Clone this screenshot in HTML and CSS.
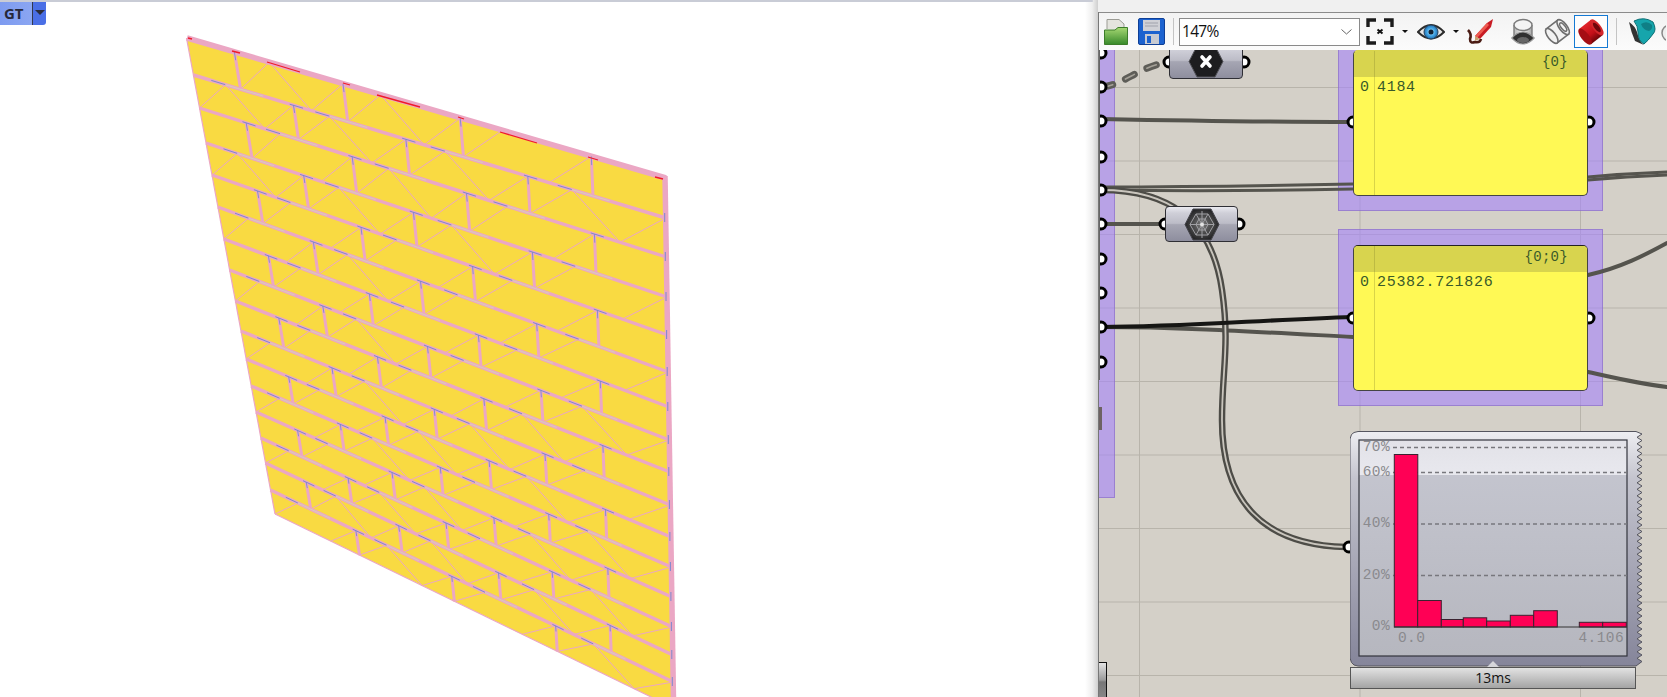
FILE: index.html
```html
<!DOCTYPE html>
<html lang="en">
<head>
<meta charset="utf-8">
<title>Grasshopper and Rhino viewport</title>
<link rel="stylesheet" href="styles.css">
</head>
<body>
<main class="app">
  <section class="viewport">
    <svg id="wall" class="wall" width="1085" height="697" viewBox="0 0 1085 697"></svg>
    <div class="gt-button">
      <span class="gt-label">GT</span>
      <span class="gt-drop"><span class="gt-caret"></span></span>
    </div>
  </section>
  <div class="edge"></div>
  <section class="editor">
    <div class="titlebar"></div>
    <div class="toolbar">
      <svg class="tool t-folder" width="24" height="27" viewBox="0 0 24 27">
        <defs><linearGradient id="gf" x1="0" y1="0" x2="0" y2="1"><stop offset="0" stop-color="#a6d873"/><stop offset="1" stop-color="#37892a"/></linearGradient></defs>
        <path d="M3 11V1.500H15L20 6V12" fill="#e4e4de" stroke="#9b9b94"/>
        <path d="M.5 26.500V12H11L14 9.500H23.500V26.500Z" fill="url(#gf)" stroke="#3c7d2a"/>
      </svg>
      <svg class="tool t-floppy" width="27" height="27" viewBox="0 0 27 27">
        <path d="M2 .5H25Q26.500 .5 26.500 2V25Q26.500 26.500 25 26.500H2Q.5 26.500 .5 25V2Q.5 .5 2 .5Z" fill="#1c62cf" stroke="#0f3f96"/>
        <rect x="5" y="2" width="17" height="11" fill="#cfd0d6"/>
        <path d="M7 5H20M7 8H20" stroke="#a0a2ac"/>
        <rect x="7" y="16" width="14" height="10" fill="#c7cad2"/>
        <rect x="9" y="18" width="4" height="7" fill="#1c62cf"/>
      </svg>
      <span class="tool tool-sep t-sep1"></span>
      <div class="tool combo">
        <span class="combo-value">147%</span>
        <svg class="combo-chevron" width="11" height="6" viewBox="0 0 11 6"><path d="M.5 .5L5.500 5L10.500 .5" fill="none" stroke="#666"/></svg>
      </div>
      <svg class="tool t-extents" width="28" height="27" viewBox="0 0 28 27">
        <path d="M2 9V2H10M18 2H26V9M26 18V25H18M10 25H2V18" fill="none" stroke="#1b1b1b" stroke-width="3.400"/>
        <path d="M11.500 11.500L16.500 15.500M16.500 11.500L11.500 15.500" stroke="#111" stroke-width="2"/>
      </svg>
      <span class="tool tool-caret t-caret1"></span>
      <svg class="tool t-eye" width="28" height="20" viewBox="0 0 28 20">
        <defs><radialGradient id="gi"><stop offset="0" stop-color="#d8f2ff"/><stop offset=".55" stop-color="#45a8e6"/><stop offset="1" stop-color="#1f6db0"/></radialGradient></defs>
        <path d="M1 10Q14 -4 27 10Q14 23 1 10Z" fill="#e8e8e8" stroke="#2c2c2c" stroke-width="2"/>
        <circle cx="14" cy="10" r="7" fill="url(#gi)" stroke="#24425e"/>
        <circle cx="14" cy="10" r="2.500" fill="#123"/>
      </svg>
      <span class="tool tool-caret t-caret2"></span>
      <svg class="tool t-pen" width="27" height="27" viewBox="0 0 27 27">
        <path d="M1 12Q5 16 3 21Q3 26 8 24Q13 25 14 21" fill="none" stroke="#4a1c14" stroke-width="2.600"/>
        <path d="M8 18L20 5L26 1L24 9L13 21Z" fill="#c81c24"/>
        <path d="M8 18L20 5L22 7L10 20Z" fill="#ee5a50"/>
        <path d="M8 18L13 21L8 23Z" fill="#c9a070"/>
      </svg>
      <svg class="tool t-off" width="24" height="28" viewBox="0 0 24 28">
        <defs><linearGradient id="go" x1="0" y1="0" x2="1" y2="0"><stop offset="0" stop-color="#b8b8b8"/><stop offset=".5" stop-color="#f0f0f0"/><stop offset="1" stop-color="#a8a8a8"/></linearGradient></defs>
        <path d="M3 7V19H21V7" fill="url(#go)" stroke="#7c7c7c" stroke-width="1.400"/>
        <ellipse cx="12" cy="7" rx="9" ry="5.500" fill="#f4f4f4" stroke="#7c7c7c" stroke-width="1.400"/>
        <path d="M.8 20Q12 8 23.200 20Q12 32 .8 20Z" fill="#303030" stroke="#9a9a9a" stroke-width="1.200"/>
        <ellipse cx="12" cy="22" rx="6" ry="3" fill="#666"/>
      </svg>
      <svg class="tool t-wire" width="27" height="27" viewBox="0 0 27 27">
        <g transform="rotate(-38 13.500 13.500) translate(2 2) scale(.85)" fill="#f2f2f2" stroke="#6e6e6e" stroke-width="1.900">
          <path d="M5 3H22V24H5Z"/>
          <ellipse cx="5" cy="13.500" rx="4.500" ry="10.500"/>
          <ellipse cx="22" cy="13.500" rx="4.500" ry="10.500"/>
          <ellipse cx="22" cy="13.500" rx="2.400" ry="6"/>
        </g>
      </svg>
      <div class="tool shade-box">
        <svg width="28" height="28" viewBox="0 0 27 27">
          <defs><linearGradient id="gr" x1="0" y1="0" x2="0" y2="1"><stop offset="0" stop-color="#e0242a"/><stop offset=".6" stop-color="#c20f18"/><stop offset="1" stop-color="#6d0509"/></linearGradient></defs>
          <g transform="rotate(-38 13.500 13.500) translate(2 2) scale(.85)">
            <rect x="5" y="2.500" width="17" height="22" fill="url(#gr)"/>
            <ellipse cx="5" cy="13.500" rx="4.500" ry="11" fill="#a50d14"/>
            <ellipse cx="22" cy="13.500" rx="4.500" ry="11" fill="#d3262b"/>
            <ellipse cx="22" cy="13.500" rx="2.600" ry="6.500" fill="#6e060b"/>
          </g>
        </svg>
      </div>
      <span class="tool tool-sep t-sep2"></span>
      <svg class="tool t-teal" width="29" height="28" viewBox="0 0 29 28">
        <path d="M1 4Q7 8 9 14Q11 23 16 27L7 23Q3 14 1 4Z" fill="#333"/>
        <path d="M6 3Q16 -2 25 4Q29 12 25 16Q20 23 16 26Q10 23 10 14Q10 8 6 3Z" fill="#16a5ac" stroke="#0e6f75"/>
        <path d="M13 6Q19 2 24 7Q25 11 21 13Q15 12 13 6Z" fill="#0f7f86"/>
      </svg>
      <svg class="tool t-partial" width="6" height="27" viewBox="0 0 6 27">
        <ellipse cx="10" cy="15" rx="8" ry="8" fill="#eee" stroke="#888" stroke-width="1.500"/>
      </svg>
    </div>
    <div class="canvas">
      <div class="group group-left"></div>
      <div class="group group-a"></div>
      <div class="group group-b"></div>

      <svg class="wires" width="568" height="647" viewBox="1099 50 568 647">
        <g fill="none" stroke-linecap="round">
          <path class="dash-outer" d="M1103 87C1125 84 1140 66 1169 62"/>
          <path class="dash-inner" d="M1103 87C1125 84 1140 66 1169 62"/>
          <path class="wire" d="M1101 119C1200 121 1250 122 1353 122"/>
          <path class="wire-thin" d="M1101 187C1180 187 1260 186 1353 184"/>
          <path class="wire-thin" d="M1101 190C1180 191 1260 191 1353 189"/>
          <path class="wire-thin" d="M1588 177C1610 175 1640 173 1667 172"/>
          <path class="wire-thin" d="M1588 180C1610 178 1640 176 1667 175"/>
          <path class="wire" d="M1101 224H1165"/>
          <path class="wire" d="M1101 327C1180 327 1260 332 1353 337"/>
          <path class="long-outer" d="M1101 190C1170 190 1212 220 1222 290C1230 345 1222 370 1222 420C1222 500 1262 545 1346 547"/>
          <path class="long-inner" d="M1101 190C1170 190 1212 220 1222 290C1230 345 1222 370 1222 420C1222 500 1262 545 1346 547"/>
          <path class="wire-black" d="M1101 327C1180 327 1260 320 1353 317"/>
          <path class="wire" d="M1588 275C1620 268 1645 255 1667 243"/>
          <path class="wire" d="M1588 372C1615 378 1640 384 1667 387"/>
        </g>
        <g class="ports">
          <circle cx="1101" cy="53" r="5"/><circle cx="1101" cy="87" r="5"/><circle cx="1101" cy="121" r="5"/>
          <circle cx="1101" cy="157" r="5"/><circle cx="1101" cy="190" r="5"/><circle cx="1101" cy="224" r="5"/>
          <circle cx="1101" cy="259" r="5"/><circle cx="1101" cy="293" r="5"/><circle cx="1101" cy="327" r="5"/>
          <circle cx="1101" cy="362" r="5"/>
          <circle cx="1169" cy="62" r="5"/><circle cx="1244" cy="62" r="5"/>
          <circle cx="1165" cy="224" r="5"/><circle cx="1239" cy="224" r="5"/>
          <circle cx="1353" cy="122" r="5"/><circle cx="1589" cy="122" r="5"/>
          <circle cx="1353" cy="318" r="5"/><circle cx="1589" cy="318" r="5"/>
          <circle cx="1349" cy="547" r="5"/>
        </g>
      </svg>

      <span class="left-rail"></span>
      <span class="left-stub"></span>
      <span class="left-thumb"></span>

      <div class="node node-x">
        <svg width="36" height="33" viewBox="0 0 36 33">
          <path d="M9 1H27L35 16.500L27 32H9L1 16.500Z" fill="#1d1d1f" stroke="#55555b"/>
          <path d="M14 12L22 21M22 12L14 21" stroke="#fff" stroke-width="3.600" stroke-linecap="round"/>
        </svg>
      </div>
      <div class="node node-web">
        <svg width="36" height="33" viewBox="0 0 36 33">
          <defs><radialGradient id="gw"><stop offset="0" stop-color="#777"/><stop offset="1" stop-color="#262628"/></radialGradient></defs>
          <path d="M9 1H27L35 16.500L27 32H9L1 16.500Z" fill="url(#gw)" stroke="#45454b"/>
          <g fill="none" stroke="#a0a0a4" stroke-width="1">
            <path d="M12 6H24L30 16.500L24 27H12L6 16.500Z"/>
            <path d="M15 11H21L24 16.500L21 22H15L12 16.500Z"/>
            <path d="M12 6L24 27M24 6L12 27M6 16.500H30M18 3V30"/>
          </g>
          <circle cx="18" cy="16.500" r="2" fill="#e4e4e4"/>
        </svg>
      </div>

      <article class="panel panel-a">
        <header class="panel-head">{0}</header>
        <div class="panel-row"><span class="panel-index">0</span><span class="panel-value">4184</span></div>
      </article>
      <article class="panel panel-b">
        <header class="panel-head">{0;0}</header>
        <div class="panel-row"><span class="panel-index">0</span><span class="panel-value">25382.721826</span></div>
      </article>

      <figure class="hist">
        <svg class="hist-chart" width="293" height="236" viewBox="1350 431 293 236">
          <defs>
            <linearGradient id="gb" x1="0" y1="0" x2="0" y2="1"><stop offset="0" stop-color="#eeeef2"/><stop offset=".2" stop-color="#c4c4ce"/><stop offset="1" stop-color="#85859a"/></linearGradient>
            <linearGradient id="gt" x1="0" y1="0" x2="0" y2="1"><stop offset="0" stop-color="#e2e2e8"/><stop offset="1" stop-color="#e8e8ee"/></linearGradient>
            <linearGradient id="gl" x1="0" y1="0" x2="0" y2="1"><stop offset="0" stop-color="#c6c7d1"/><stop offset="1" stop-color="#b6b7bf"/></linearGradient>
          </defs>
          <polygon id="hist-body" fill="url(#gb)" stroke="#55555f" stroke-width="1"/>
          <rect x="1359" y="440" width="268" height="216" fill="url(#gl)"/>
          <rect x="1359" y="440" width="268" height="35" fill="url(#gt)"/>
          <rect x="1359" y="440" width="268" height="216" fill="none" stroke="#33343c" stroke-width="1.200"/>
          <g class="hist-grid">
            <path d="M1393 447.500H1627M1393 472.500H1627M1393 524H1627M1393 575.500H1627"/>
          </g>
          <g class="hist-bars">
            <rect x="1394.300" y="454.500" width="23.500" height="172.500"/>
            <rect x="1417.700" y="600.500" width="23.600" height="26.500"/>
            <rect x="1441.300" y="619.500" width="22" height="7.500"/>
            <rect x="1463.300" y="617.800" width="23.400" height="9.200"/>
            <rect x="1486.700" y="621" width="23.600" height="6"/>
            <rect x="1510.300" y="615.300" width="23.400" height="11.700"/>
            <rect x="1533.700" y="610.700" width="23.600" height="16.300"/>
            <rect x="1579.300" y="622.300" width="23.400" height="4.700"/>
            <rect x="1602.700" y="622.300" width="23.600" height="4.700"/>
          </g>
          <path class="hist-base" d="M1394 627H1627"/>
          <g class="hist-text">
            <text x="1390" y="451" text-anchor="end">70%</text>
            <text x="1390" y="476" text-anchor="end">60%</text>
            <text x="1390" y="527" text-anchor="end">40%</text>
            <text x="1390" y="579" text-anchor="end">20%</text>
            <text x="1390" y="630" text-anchor="end">0%</text>
            <text x="1398" y="642">0.0</text>
            <text x="1624" y="642" text-anchor="end">4.106</text>
          </g>
        </svg>
        <figcaption class="hist-tab">13ms</figcaption>
      </figure>
    </div>
  </section>
</main>
<script src="script.js"></script>
</body>
</html>
```
FILE: styles.css
```css
* { box-sizing: border-box; }
html, body { margin: 0; height: 100%; overflow: hidden; background: #fff; }
.app { display: flex; width: 1667px; height: 697px; overflow: hidden; }

/* Rhino viewport */
.viewport {
  position: relative;
  flex: 0 0 1085px;
  height: 697px;
  background: linear-gradient(#c9ccd6 2px, #fff 2px);
}
.wall { display: block; }
.gt-button {
  position: absolute;
  left: 0;
  top: 2px;
  width: 46px;
  height: 23px;
  display: flex;
  border-bottom-right-radius: 3px;
  overflow: hidden;
}
.gt-label {
  flex: 0 0 32px;
  padding-left: 4px;
  background: linear-gradient(90deg, #7d9bf0, #8ba6f2);
  color: #26283a;
  font: 700 15px/23px "Open Sans", "Liberation Sans", sans-serif;
}
.gt-drop {
  flex: 1;
  display: flex;
  align-items: center;
  justify-content: center;
  border-left: 1px solid #33384e;
  background: #4a6fe6;
}
.gt-caret {
  width: 0;
  height: 0;
  margin-bottom: 2px;
  border-left: 5px solid transparent;
  border-right: 5px solid transparent;
  border-top: 5px solid #2a2c3c;
}

.edge {
  flex: 0 0 13px;
  background:
    linear-gradient(#c9ccd6 2px, transparent 2px) 0 0 / 60% 100% no-repeat,
    linear-gradient(90deg, #fff, #efefef 55%, #cfcfcf);
}

/* Grasshopper editor */
.editor {
  flex: 1;
  min-width: 0;
  display: flex;
  flex-direction: column;
  border-left: 1px solid #777;
}
.titlebar { flex: 0 0 12px; background: #f0f0f0; margin-left: -1px; }
.toolbar {
  flex: 0 0 38px;
  display: flex;
  align-items: center;
  overflow: hidden;
  border-top: 1.500px solid #8b8b8b;
  background: linear-gradient(#f3f3f3, #fbfbfb);
}
.tool { flex: none; display: block; }
.t-folder { margin-left: 5px; }
.t-floppy { margin-left: 10px; }
.tool-sep { width: 1px; height: 27px; background: #c4c4c4; }
.t-sep1 { margin-left: 8px; }
.combo {
  margin-left: 5px;
  width: 181px;
  height: 28px;
  display: flex;
  align-items: center;
  justify-content: space-between;
  padding: 0 7px 0 2px;
  background: #fff;
  border: 1px solid #8a8a8a;
}
.combo-value {
  color: #111;
  font: 15.500px/1 "Open Sans", "Liberation Sans", sans-serif;
  letter-spacing: -.7px;
}
.t-extents { margin-left: 6px; }
.tool-caret {
  width: 0;
  height: 0;
  border-left: 3px solid transparent;
  border-right: 3px solid transparent;
  border-top: 3px solid #111;
}
.t-caret1 { margin-left: 8px; }
.t-eye { margin-left: 9px; }
.t-caret2 { margin-left: 8px; }
.t-pen { margin-left: 8px; }
.t-off { margin-left: 17px; }
.t-wire { margin-left: 9px; }
.shade-box {
  margin-left: 3px;
  width: 34px;
  height: 33px;
  display: flex;
  align-items: center;
  justify-content: center;
  border: 1.500px solid #1479d4;
  background: #fdfdfd;
}
.t-sep2 { margin-left: 8px; }
.t-teal { margin-left: 11px; }
.t-partial { margin-left: 3px; }

.canvas {
  position: relative;
  flex: 1;
  overflow: hidden;
  background-color: #d4d0c8;
  background-image:
    linear-gradient(#b8b4ab 1px, transparent 1px),
    linear-gradient(90deg, #b8b4ab 1px, transparent 1px);
  background-size: 220.500px 73.500px;
  background-position: 40px 37px;
}
.group {
  position: absolute;
  background: rgba(165, 131, 250, .6);
  border: 1px solid rgba(130, 100, 190, .55);
}
.group-left { left: -1px; top: -5px; width: 17px; height: 453px; }
.group-a { left: 239px; top: -20px; width: 265px; height: 181px; }
.group-b { left: 239px; top: 179px; width: 265px; height: 177px; }

.wires { position: absolute; left: 0; top: 0; display: block; }
.wire { stroke: #55544e; stroke-width: 4; }
.wire-thin { stroke: #55544e; stroke-width: 3; }
.wire-black { stroke: #161614; stroke-width: 4; }
.long-outer { stroke: #4d4c47; stroke-width: 6.500; }
.long-inner { stroke: #c9c5bd; stroke-width: 1.800; }
.dash-outer { stroke: #5e5d58; stroke-width: 7; stroke-dasharray: 10 14; }
.dash-inner { stroke: #a5a198; stroke-width: 1.600; stroke-dasharray: 10 14; }
.ports circle { fill: #fff; stroke: #000; stroke-width: 3; }

.left-rail { position: absolute; left: 0; top: 0; width: 1px; height: 330px; background: #666; }
.left-stub { position: absolute; left: 0; top: 357px; width: 3px; height: 23px; background: #6d6262; }
.left-thumb {
  position: absolute;
  left: -1px;
  top: 612px;
  width: 9px;
  height: 40px;
  border: 1px solid #111;
  background: linear-gradient(#e4e4e4, #9a9a9a 45%, #777 50%, #8a8a8a);
}

.node {
  position: absolute;
  height: 36px;
  display: flex;
  align-items: center;
  justify-content: center;
  border: 1px solid #2f2f35;
  border-radius: 4px;
  background: linear-gradient(#eaeaf0, #cfcfd8 18%, #bcbcc7 48%, #a6a6b3 52%, #8e8e9e);
}
.node-x { left: 70px; top: -7px; width: 74px; }
.node-web { left: 66px; top: 156px; width: 73px; }

.panel {
  position: absolute;
  left: 254px;
  width: 235px;
  overflow: hidden;
  border: 1px solid #444;
  border-radius: 5px;
  background: #fff955;
  color: #3a5a2a;
  font: 15px/17px "Liberation Mono", monospace;
  letter-spacing: .7px;
}
.panel::before {
  content: "";
  position: absolute;
  left: 20px;
  top: 0;
  bottom: 0;
  width: 1px;
  background: rgba(120, 120, 40, .28);
}
.panel-a { top: 0; height: 146px; border-top-color: #d8d44e; }
.panel-b { top: 195px; height: 146px; border-top-color: #222; }
.panel-head {
  height: 26px;
  padding: 3px 19px 0 0;
  text-align: right;
  background: #d8d44e;
  font-size: 14px;
  letter-spacing: .3px;
}
.panel-row { display: flex; padding-top: 2px; }
.panel-index { flex: 0 0 23px; padding-left: 6px; }

.hist {
  position: absolute;
  left: 251px;
  top: 381px;
  margin: 0;
  width: 293px;
}
.hist-chart { display: block; }
.hist-grid path { fill: none; stroke: #77777d; stroke-width: 1.300; stroke-dasharray: 4 3; }
.hist-bars rect { fill: #ff0055; stroke: #3a2230; stroke-width: 1; }
.hist-base { fill: none; stroke: #333; stroke-width: 1; }
.hist-text text {
  fill: #8a8a8e;
  font: 14.500px "Liberation Mono", monospace;
  letter-spacing: .4px;
}
.hist-tab {
  position: relative;
  width: 286px;
  height: 22px;
  text-align: center;
  border: 1px solid #555;
  background: linear-gradient(#e2e2e2, #a4a4a4);
  color: #111;
  font: 14px/20px "Open Sans", "Liberation Sans", sans-serif;
}
.hist-tab::before {
  content: "";
  position: absolute;
  left: 136px;
  top: -7px;
  width: 0;
  height: 0;
  border-left: 6px solid transparent;
  border-right: 6px solid transparent;
  border-bottom: 6px solid #d6d6da;
}
```
FILE: script.js
```js
(function () {
  var LY = [38, 75, 108, 143, 175, 207, 239, 270, 301, 331, 359, 386, 412, 438, 463, 490, 514];
  var RY = [178, 218, 257, 297, 335, 372, 407, 440, 472, 505, 537, 567, 597, 627, 655, 682, 708];
  var EVEN = [0, 0.1, 0.327, 0.572, 0.846, 1];
  var ODD = [0, 0.212, 0.45, 0.708, 1];
  var DESC = [
    [0, 1, 1, 0, 0], [1, 1, 1, 1], [0, 0, 1, 0, 0], [1, 1, 1, 0],
    [0, 0, 0, 0, 0], [0, 1, 0, 0], [0, 0, 0, 0, 0], [0, 1, 0, 1],
    [0, 0, 0, 1, 0], [0, 1, 1, 0], [0, 0, 1, 1, 0], [0, 1, 0, 1],
    [0, 0, 1, 1, 0], [0, 1, 0, 1], [0, 1, 1, 1, 0], [0, 1, 0, 1]
  ];
  var YELLOW = '#f9da42', PINK = '#eba7c4', BLUE = '#6f86cf', PALE = '#d2d6b8', RED = '#f01a2a';

  function pt(n, u) {
    var lx = 186.5 + (LY[n] - 38) * 88.5 / 476;
    var rx = 665 + (RY[n] - 176) * 8.5 / 521;
    return [lx + (rx - lx) * u, LY[n] + (RY[n] - LY[n]) * u];
  }
  function seg(a, b, color, w) {
    return '<line x1="' + a[0].toFixed(1) + '" y1="' + a[1].toFixed(1) + '" x2="' + b[0].toFixed(1) +
      '" y2="' + b[1].toFixed(1) + '" stroke="' + color + '" stroke-width="' + w + '"/>';
  }

  var thin = '', thick = '', marks = '';
  DESC.forEach(function (flags, r) {
    var even = r % 2 === 0;
    var us = even ? EVEN : ODD;
    for (var b = 0; b < us.length - 1; b++) {
      var s = us[b], e = us[b + 1], w = e - s;
      var hasZig = !even || (b > 0 && b < us.length - 2);
      if (hasZig) {
        var top = s + 0.32 * w, bot = s + 0.66 * w;
        thin += seg(pt(r + 1, s), pt(r, top), PINK, 1);
        thin += seg(pt(r + 1, bot), pt(r, e), PINK, 1);
        if (flags[b]) thin += seg(pt(r, top), pt(r + 1, bot), PINK, 1);
        if (r > 0) {
          marks += seg(pt(r, top - 0.03), pt(r, top), BLUE, 0.9);
          marks += seg(pt(r, top), pt(r, top + 0.08), PALE, 0.9);
        }
      }
      if (b > 0) {
        var jt = pt(r, s), jb = pt(r + 1, s);
        thick += seg(jt, jb, PINK, 3);
        marks += seg(jt, [jt[0] + (jb[0] - jt[0]) * 0.22, jt[1] + (jb[1] - jt[1]) * 0.22], BLUE, 0.8);
        if (r > 0) marks += seg(pt(r, s - 0.008), pt(r, s + 0.02), BLUE, 0.9);
      }
    }
  });
  for (var n = 1; n < LY.length - 1; n++) {
    thick += seg(pt(n, 0), pt(n, 1), PINK, 3.4);
    var rp = pt(n, 1);
    marks += seg([rp[0] - 1, rp[1] - 5], [rp[0] - 1, rp[1] + 4], BLUE, 0.9);
  }
  var redBits = [[267, 62, 300, 72], [377, 95, 420, 107], [500, 132, 537, 143], [588, 157, 598, 160], [655, 177, 663, 179], [232, 51, 240, 53], [343, 83, 350, 85], [458, 117, 464, 119], [188, 38, 192, 39]];
  var red = redBits.map(function (q) { return seg([q[0], q[1]], [q[2], q[3]], RED, 1.3); }).join('');

  var poly = [pt(0, 0), pt(0, 1), pt(16, 1), pt(16, 0)].map(function (p) { return p.join(','); }).join(' ');
  document.getElementById('wall').innerHTML =
    '<polygon points="' + poly + '" fill="' + YELLOW + '"/>' +
    thin + thick +
    seg(pt(0, 0), pt(16, 0), PINK, 1.2) +
    seg(pt(16, 0), pt(16, 1), PINK, 1.2) +
    seg([187, 38], [666, 178], PINK, 5.5) +
    seg([665, 176], [673.5, 700], PINK, 5.5) +
    marks + red;

  /* Serrated right edge of the histogram component */
  var pts = ['1358,431.5', '1636,431.5'];
  var y = 434, side = 0;
  while (y < 664) {
    pts.push((side ? '1637' : '1642') + ',' + y.toFixed(1));
    side = 1 - side;
    y += 3.25;
  }
  pts.push('1636,666', '1358,666', '1354,665', '1351.500,662.500', '1350,658', '1350,439', '1351.500,434.500', '1354,432.500');
  document.getElementById('hist-body').setAttribute('points', pts.join(' '));
})();
```
